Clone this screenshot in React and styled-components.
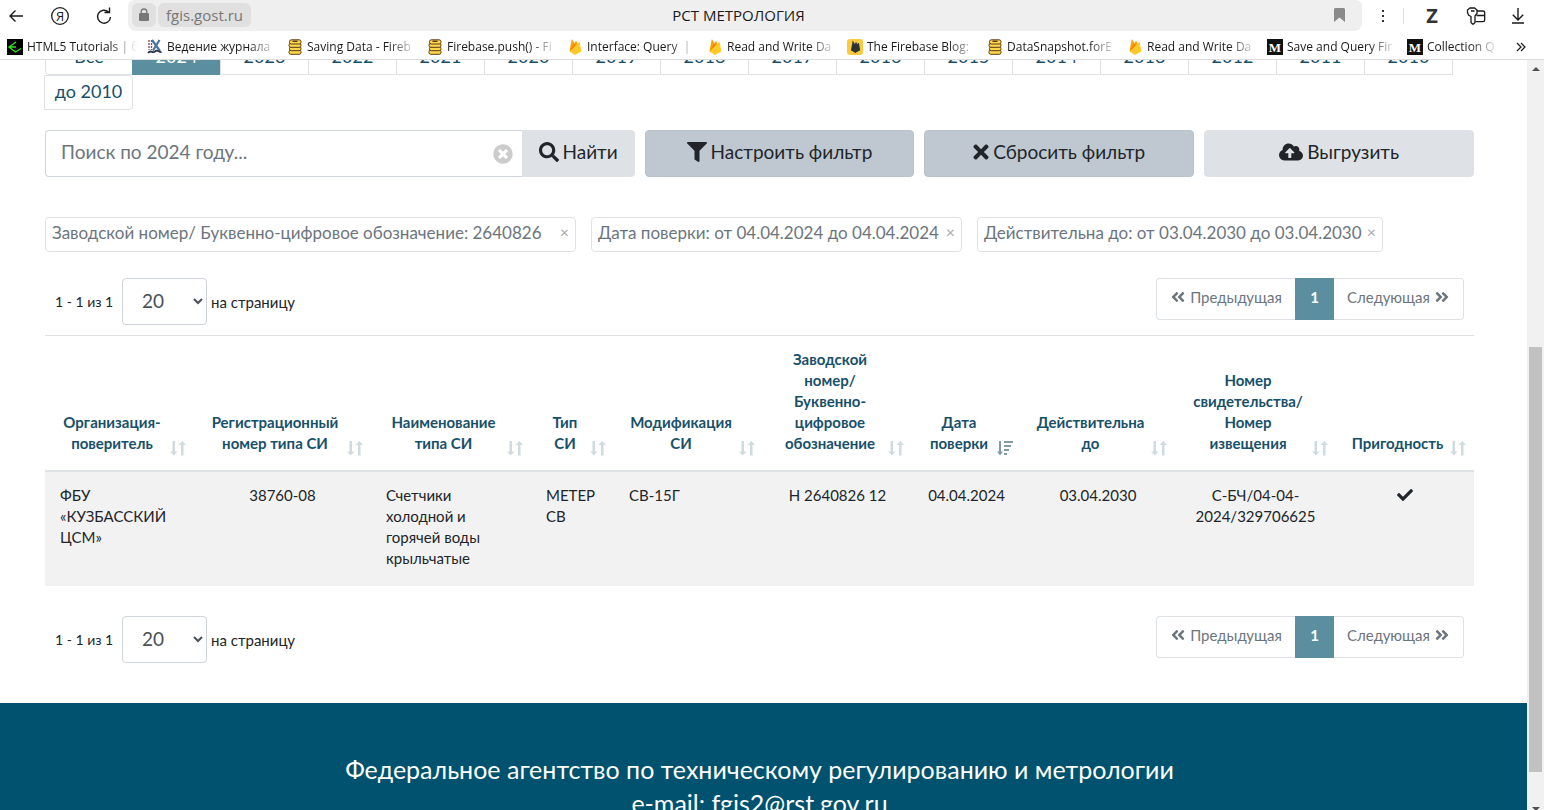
import React from "react";
import styled, { createGlobalStyle, css } from "styled-components";
import {
  FaSearch,
  FaFilter,
  FaTimes,
  FaTimesCircle,
  FaCloudUploadAlt,
  FaAngleDoubleLeft,
  FaAngleDoubleRight,
  FaCheck,
} from "react-icons/fa";

const uiFont = `"Open Sans", "Noto Sans", sans-serif`;
const pageFont = `Lato, "Open Sans", "Noto Sans", sans-serif`;

const GlobalStyle = createGlobalStyle`
  *, *::before, *::after { box-sizing: border-box; }
  html, body { margin: 0; height: 100%; overflow: hidden; }
  button, input, select { font: inherit; color: inherit; margin: 0; }
`;

const Window = styled.div`
  display: flex;
  flex-direction: column;
  height: 100vh;
  background: #fff;
  font-family: ${pageFont};
  color: #212529;
`;

/* ---------- Browser chrome ---------- */

const TopBar = styled.header`
  display: flex;
  flex: none;
  height: 31px;
  font-family: ${uiFont};
`;

const NavButtons = styled.div`
  display: flex;
  align-items: center;
  gap: 26px;
  width: 128px;
  padding-left: 7px;
`;

const IconButton = styled.button`
  display: flex;
  align-items: center;
  justify-content: center;
  padding: 0;
  border: 0;
  background: none;
  color: #1a1a1a;
  svg { display: block; }
`;

const AddressBar = styled.div`
  display: grid;
  grid-template-columns: 1fr auto 1fr;
  align-items: center;
  flex: 1;
  padding: 0 17px 1px 4px;
  border-radius: 6px 6px 8px 8px;
  background: #efefef;
`;

const AddressGroup = styled.div`
  display: flex;
  align-items: center;
  gap: 2px;
`;

const AddressPill = styled.button`
  display: flex;
  align-items: center;
  height: 24px;
  padding: ${(p) => (p.$icon ? "0 7px" : "0 8px 1px")};
  border: 0;
  border-radius: 6px;
  background: #e0e0e0;
  color: #777;
  font-size: 15px;
`;

const PageTitle = styled.span`
  font-size: 15px;
  color: #1a1a1a;
`;

const AddressEnd = styled.div`
  display: flex;
  justify-content: flex-end;
`;

const Tools = styled.div`
  display: grid;
  grid-template-columns: 41px 1px 56px 32px 1fr;
  align-items: center;
  justify-items: center;
  width: 182px;
`;

const LetterButton = styled(IconButton)`
  color: #333;
  font-size: 20px;
  font-weight: 700;
  line-height: 24px;
`;

const Divider = styled.span`
  width: 1px;
  height: 16px;
  background: #ddd;
`;

const BookmarkBar = styled.nav`
  display: flex;
  flex: none;
  align-items: center;
  height: 29px;
  padding: 4px 0 0 7px;
  border-bottom: 1px solid #ddd;
  font-family: ${uiFont};
  font-size: 12px;
  color: #1a1a1a;
`;

const BookmarkList = styled.div`
  display: flex;
  flex: 1;
  min-width: 0;
  overflow: hidden;
`;

const Bookmark = styled.a`
  display: flex;
  align-items: center;
  gap: 4px;
  flex: 0 0 140px;
  min-width: 0;
  padding-right: 10px;
  color: inherit;
  text-decoration: none;
  svg { flex: none; }
  &:last-child { flex: 1 1 0; padding-right: 0; }
`;

const BookmarkText = styled.span`
  flex: 1;
  overflow: hidden;
  white-space: pre;
  line-height: 20px;
  mask-image: linear-gradient(to right, #000 calc(100% - 28px), transparent);
`;

const MoreButton = styled(IconButton)`
  width: 46px;
  height: 20px;
`;

/* ---------- Scrolled page ---------- */

const Viewport = styled.div`
  display: flex;
  flex: 1;
  min-height: 0;
`;

const Page = styled.div`
  display: flex;
  flex-direction: column;
  flex: 1;
  min-width: 0;
  overflow: hidden;
`;

const Main = styled.main`
  flex: none;
  padding: 0 53px 40px 45px;
`;

const YearTabs = styled.div`
  display: flex;
  flex-wrap: wrap;
  margin-top: -20px;
  margin-bottom: 20px;
`;

const YearTab = styled.button`
  width: 89px;
  height: 35px;
  margin-left: -1px;
  padding: 0 0 4px;
  border: 1px solid #dee2e6;
  background: #fff;
  color: #18506a;
  font-size: 18px;
  line-height: 24px;
  &:first-child { width: 88px; margin-left: 0; border-radius: 4px 0 0 4px; }
  &:last-child { border-radius: 0 4px 4px 0; }
  ${(p) => p.$active && css`
    border-color: #5b8fa0;
    background: #5b8fa0;
    color: #fff;
  `}
`;

const SearchRow = styled.form`
  display: grid;
  grid-template-columns: minmax(0, 590fr) repeat(3, minmax(0, 270fr));
  gap: 10px;
  height: 47px;
  margin-bottom: 40px;
  font-size: 19px;
`;

const SearchGroup = styled.div`
  display: flex;
`;

const SearchField = styled.div`
  display: flex;
  align-items: center;
  flex: 1;
  min-width: 0;
  padding: 0 9px 0 15px;
  border: 1px solid #ced4da;
  border-right: 0;
  border-radius: 4px 0 0 4px;
`;

const SearchInput = styled.input`
  flex: 1;
  min-width: 0;
  padding: 0 0 4px;
  border: 0;
  outline: 0;
  background: none;
  &::placeholder { color: #6c757d; opacity: 1; }
`;

const ClearButton = styled(IconButton)`
  color: #ccc;
`;

const ActionButton = styled.button`
  display: flex;
  align-items: center;
  justify-content: center;
  gap: 4px;
  padding: 0 0 4px;
  border: 1px solid ${(p) => (p.$strong ? "#b8c2ca" : "#dee2e6")};
  border-radius: 4px;
  background: ${(p) => (p.$strong ? "#bfc8d0" : "#dee2e6")};
  white-space: nowrap;
`;

const FindButton = styled(ActionButton)`
  width: 113px;
  border-radius: 0 4px 4px 0;
`;

const CrossIcon = styled(FaTimes)`
  width: 16px;
  height: 22px;
`;

const Chips = styled.div`
  display: flex;
  flex-wrap: wrap;
  gap: 15px;
  margin-bottom: 26px;
`;

const Chip = styled.div`
  display: flex;
  align-items: center;
  justify-content: space-between;
  gap: 4px;
  min-width: ${(p) => p.$w}px;
  height: 35px;
  padding: 0 6px 5px;
  border: 1px solid #dee2e6;
  border-radius: 4px;
  color: #6c757d;
  font-size: 17px;
  white-space: nowrap;
`;

const ChipClose = styled.button`
  padding: 0;
  border: 0;
  background: none;
  color: #aaa;
  font-size: 16px;
  line-height: 16px;
`;

const PagerRow = styled.div`
  display: flex;
  align-items: flex-start;
  justify-content: space-between;
  padding: 0 10px;
  font-size: 15px;
`;

const PageSize = styled.div`
  display: flex;
  align-items: center;
`;

const Count = styled.span`
  width: 67px;
  font-size: 14px;
`;

const SizeLabel = styled.label`
  display: flex;
  align-items: center;
  gap: 4px;
`;

const SizeSelect = styled.select`
  width: 85px;
  height: 47px;
  padding: 0 1px 2px 15px;
  border: 1px solid #ced4da;
  border-radius: 4px;
  background: #fff;
  color: #495057;
  font-size: 19px;
`;

const Pagination = styled.nav`
  display: flex;
  height: 42px;
`;

const PageLink = styled.button`
  display: flex;
  align-items: center;
  justify-content: center;
  gap: 4px;
  width: ${(p) => (p.$active ? 39 : p.$next ? 130 : 139)}px;
  padding: 0 0 4px;
  border: 1px solid #dee2e6;
  background: #fff;
  color: #6c757d;
  &:first-child { border-right: 0; border-radius: 4px 0 0 4px; }
  &:last-child { border-left: 0; border-radius: 0 4px 4px 0; }
  ${(p) => p.$active && css`
    border-color: #5b8fa0;
    background: #5b8fa0;
    color: #fff;
    font-weight: 700;
  `}
`;

const Table = styled.table`
  width: 100%;
  margin: 10px 0 30px;
  border-collapse: separate;
  border-spacing: 0;
  table-layout: fixed;
  font-size: 15px;
  line-height: 21px;
`;

const Th = styled.th`
  position: relative;
  padding: 13px 30px 16px 15px;
  border-top: 1px solid #dee2e6;
  border-bottom: 2px solid #dee2e6;
  vertical-align: bottom;
  color: #18506a;
  font-weight: 700;
  white-space: pre;
`;

const HeadLabel = styled.div`
  display: flex;
  justify-content: center;
`;

const SortMark = styled.button`
  position: absolute;
  right: 8px;
  bottom: 14px;
  padding: 0;
  border: 0;
  background: none;
  color: ${(p) => (p.$active ? "#7f9ba6" : "#d0dbdf")};
  svg { display: block; }
`;

const Td = styled.td`
  padding: 13px 15px 17px;
  background: #f2f2f2;
  vertical-align: top;
  text-align: ${(p) => (p.$left ? "left" : "center")};
  white-space: pre;
  svg { vertical-align: -2px; }
`;

const Footer = styled.footer`
  flex: 1 0 auto;
  padding: 49px 53px 49px 45px;
  background: #00526e;
  color: #fff;
  font-size: 25px;
  line-height: 34px;
  text-align: center;
  p { margin: 0; }
  a { color: inherit; text-decoration: none; }
`;

const ScrollTrack = styled.div`
  display: flex;
  flex-direction: column;
  align-items: center;
  width: 17px;
  background: #f1f1f1;
`;

const ScrollArrow = styled.div`
  display: flex;
  align-items: center;
  justify-content: center;
  flex: none;
  height: 17px;
`;

const ScrollEnd = styled(ScrollArrow)`
  height: 7px;
  align-items: flex-end;
`;

const ScrollGap = styled.div`
  flex: ${(p) => p.$grow} 1 0;
`;

const ScrollThumb = styled.div`
  flex: 425 1 0;
  width: 13px;
  background: #c1c1c1;
`;

/* ---------- Drawings ---------- */

const Stroke = ({ w = 18, h = 18, sw = 1.4, children }) => (
  <svg width={w} height={h} viewBox={`0 0 ${w} ${h}`} fill="none" stroke="currentColor" strokeWidth={sw} aria-hidden="true">
    {children}
  </svg>
);

const BackIcon = () => (
  <Stroke><path d="M16 9H3M8.500 3.500 3 9l5.500 5.500" /></Stroke>
);

const YandexIcon = () => (
  <Stroke sw={1.300}>
    <circle cx="9" cy="9" r="8.300" />
    <text x="9" y="13.500" textAnchor="middle" fontSize="13" fill="currentColor" stroke="none">Я</text>
  </Stroke>
);

const ReloadIcon = () => (
  <Stroke><path d="M13.500 5A6.500 6.500 0 1 0 15.500 10M14.500 .5v5h-5" /></Stroke>
);

const LockIcon = () => (
  <svg width="10" height="14" viewBox="0 0 10 14" aria-hidden="true">
    <path d="M2.200 6V3.800a2.800 2.800 0 0 1 5.600 0V6" fill="none" stroke="#777" strokeWidth="1.300" />
    <rect y="5" width="10" height="8" rx="1.200" fill="#777" />
  </svg>
);

const RibbonIcon = () => (
  <svg width="11" height="14" viewBox="0 0 11 14" aria-hidden="true">
    <path d="M0 1.500C0 .6.600 0 1.500 0h8c.9 0 1.500.6 1.500 1.500V14L5.500 9.500 0 14z" fill="#8a8a8a" />
  </svg>
);

const DotsIcon = () => (
  <svg width="4" height="14" viewBox="0 0 4 14" fill="#333" aria-hidden="true">
    <rect x="1" y="1" width="2" height="2" /><rect x="1" y="6" width="2" height="2" /><rect x="1" y="11" width="2" height="2" />
  </svg>
);

const KeyCardIcon = () => (
  <Stroke w={20} h={18} sw={1.300}>
    <path d="M4 1h4.500l2.500 2v3.500L9 9v6.500L7.500 17H6.500L5 15.500V9.500L2.500 8 1.500 5.500V3zM5 4h3.500" />
    <path d="M11 4h6c1 0 1.700.7 1.700 1.700V13c0 1-.7 1.700-1.700 1.700H9.500M10.500 8.500h8" />
  </Stroke>
);

const DownloadIcon = () => (
  <Stroke w={14} h={16}><path d="M7 0v11.500M1.800 6.800 7 12l5.200-5.200M1 15h12" /></Stroke>
);

const ChevronsIcon = () => (
  <Stroke w={10} h={10} sw={1.200}><path d="m1 1 4 4-4 4M5 1l4 4-4 4" /></Stroke>
);

const Fav = ({ children }) => (
  <svg width="16" height="16" viewBox="0 0 16 16" aria-hidden="true">{children}</svg>
);

const flame = (a, b, c) => (
  <>
    <path d="M2.500 12.500 4.600.8c.1-.4.500-.5.700-.1l2.200 3.800L8.700 2.300c.2-.3.600-.3.800 0l4 10.200z" fill={a} />
    <path d="m2.500 12.500 5-8 2.200 3.800z" fill={b} />
    <path d="M2.500 12.500 12 3.300c.3-.3.700-.1.800.2l1.500 9-5.800 3.300a1 1 0 0 1-.9 0z" fill={c} />
  </>
);

const FAVICONS = {
  geeks: (
    <Fav>
      <rect width="16" height="16" fill="#000" />
      <path d="M9 3 2 8l6.500 5L14 9.500M2 8h7" fill="none" stroke="#2fdc1c" strokeWidth="1.400" />
    </Fav>
  ),
  ix: (
    <Fav>
      <path d="M2 1v10M4.500 1v10" stroke="#8a4550" strokeWidth="1.300" strokeDasharray="2 1" />
      <path d="m5 1 8 11M12.500 1 6 11.500" stroke="#48749d" strokeWidth="2.200" />
      <path d="M1 14c3-4 5 1 7-1.500s4 1 6.500.5" fill="none" stroke="#253447" strokeWidth="1.800" />
    </Fav>
  ),
  db: (
    <Fav>
      <g fill="#ffd84a" stroke="#5b3a16" strokeWidth="1">
        <rect x="2" y="11" width="12" height="4.300" rx="1.800" />
        <rect x="2.500" y="7.700" width="11.500" height="4" rx="1.800" />
        <rect x="2" y="4.300" width="12" height="4" rx="1.800" />
        <rect x="2.500" y=".8" width="11.500" height="4.200" rx="1.800" />
      </g>
      <path d="M5.500 2.300h5" stroke="#5b3a16" strokeWidth="1.400" />
    </Fav>
  ),
  fire: <Fav>{flame("#ffa000", "#f57c00", "#ffca28")}</Fav>,
  blog: (
    <Fav>
      <rect width="16" height="16" rx="3" fill="#fcca3f" />
      <g transform="translate(2 1.500) scale(.78)">{flame("#333c40", "#222a2d", "#2c3437")}</g>
    </Fav>
  ),
  medium: (
    <Fav>
      <rect width="16" height="16" fill="#111" />
      <text x="8" y="12.500" textAnchor="middle" fontFamily="Liberation Serif, serif" fontWeight="700" fontSize="13" fill="#fff">M</text>
    </Fav>
  ),
};

const SortIcon = ({ active }) => (
  <svg width="16" height="15" viewBox="0 0 16 15" fill="currentColor" aria-hidden="true">
    {active ? (
      <path d="M2 0h2v10.500h2L3 14.500l-3-4h2zM7 0h9v2H7zM7 4h7v2H7zM7 8h5v2H7zM7 12h3v2H7z" />
    ) : (
      <path d="M2.500 0H5v10.500h2.500l-3.700 4-3.700-4h2.400zM11 14.500h2.500V4H16L12.300 0 8.500 4H11z" />
    )}
  </svg>
);

/* ---------- Data ---------- */

const bookmarks = [
  ["geeks", "HTML5 Tutorials | б"],
  ["ix", "Ведение журнала"],
  ["db", "Saving Data - Fireb"],
  ["db", "Firebase.push() - Fi"],
  ["fire", "Interface: Query  |"],
  ["fire", "Read and Write Da"],
  ["blog", "The Firebase Blog:"],
  ["db", "DataSnapshot.forE"],
  ["fire", "Read and Write Da"],
  ["medium", "Save and Query Fir"],
  ["medium", "Collection Q"],
];

const years = [
  "Все", "2024", "2023", "2022", "2021", "2020", "2019", "2018", "2017",
  "2016", "2015", "2014", "2013", "2012", "2011", "2010", "до 2010",
];

const filters = [
  { text: "Заводской номер/ Буквенно-цифровое обозначение: 2640826", w: 531 },
  { text: "Дата поверки: от 04.04.2024 до 04.04.2024", w: 371 },
  { text: "Действительна до: от 03.04.2030 до 03.04.2030", w: 406 },
];

const columns = [
  { w: 149, head: "Организация-\nповеритель", cell: "ФБУ\n«КУЗБАССКИЙ\nЦСМ»", left: true },
  { w: 177, head: "Регистрационный\nномер типа СИ", cell: "38760-08" },
  { w: 160, head: "Наименование\nтипа СИ", cell: "Счетчики\nхолодной и\nгорячей воды\nкрыльчатые", left: true },
  { w: 83, head: "Тип\nСИ", cell: "МЕТЕР\nСВ", left: true },
  { w: 149, head: "Модификация\nСИ", cell: "СВ-15Г", left: true },
  { w: 149, head: "Заводской\nномер/\nБуквенно-\nцифровое\nобозначение", cell: "Н 2640826 12" },
  { w: 109, head: "Дата\nповерки", cell: "04.04.2024", sorted: true },
  { w: 154, head: "Действительна\nдо", cell: "03.04.2030" },
  { w: 161, head: "Номер\nсвидетельства/\nНомер\nизвещения", cell: "С-БЧ/04-04-\n2024/329706625" },
  { w: 138, head: "Пригодность", cell: <FaCheck size={16} aria-label="Пригодно" /> },
];

const totalWidth = columns.reduce((sum, c) => sum + c.w, 0);

const Col = styled.col`
  width: ${(p) => (p.$w / totalWidth) * 100}%;
`;

function Pager({ id }) {
  return (
    <PagerRow>
      <PageSize>
        <Count>1 - 1 из 1</Count>
        <SizeLabel htmlFor={id}>
          <SizeSelect id={id} defaultValue="20">
            <option>20</option>
            <option>50</option>
            <option>100</option>
          </SizeSelect>
          на страницу
        </SizeLabel>
      </PageSize>
      <Pagination aria-label="Страницы">
        <PageLink type="button"><FaAngleDoubleLeft size={16} />Предыдущая</PageLink>
        <PageLink type="button" $active>1</PageLink>
        <PageLink type="button" $next>Следующая<FaAngleDoubleRight size={16} /></PageLink>
      </Pagination>
    </PagerRow>
  );
}

export default function App() {
  return (
    <Window>
      <GlobalStyle />
      <TopBar>
        <NavButtons>
          <IconButton aria-label="Назад"><BackIcon /></IconButton>
          <IconButton aria-label="Яндекс"><YandexIcon /></IconButton>
          <IconButton aria-label="Обновить"><ReloadIcon /></IconButton>
        </NavButtons>
        <AddressBar>
          <AddressGroup>
            <AddressPill $icon aria-label="Защищено"><LockIcon /></AddressPill>
            <AddressPill>fgis.gost.ru</AddressPill>
          </AddressGroup>
          <PageTitle>РСТ МЕТРОЛОГИЯ</PageTitle>
          <AddressEnd>
            <IconButton aria-label="В закладки"><RibbonIcon /></IconButton>
          </AddressEnd>
        </AddressBar>
        <Tools>
          <IconButton aria-label="Меню"><DotsIcon /></IconButton>
          <Divider />
          <LetterButton aria-label="Расширение">Z</LetterButton>
          <IconButton aria-label="Пароли"><KeyCardIcon /></IconButton>
          <IconButton aria-label="Загрузки"><DownloadIcon /></IconButton>
        </Tools>
      </TopBar>
      <BookmarkBar>
        <BookmarkList>
          {bookmarks.map(([icon, text], i) => (
            <Bookmark key={i} href="#">
              {FAVICONS[icon]}
              <BookmarkText>{text}</BookmarkText>
            </Bookmark>
          ))}
        </BookmarkList>
        <MoreButton aria-label="Ещё"><ChevronsIcon /></MoreButton>
      </BookmarkBar>

      <Viewport>
        <Page>
          <Main>
            <YearTabs>
              {years.map((y) => (
                <YearTab key={y} type="button" $active={y === "2024"}>{y}</YearTab>
              ))}
            </YearTabs>

            <SearchRow onSubmit={(e) => e.preventDefault()}>
              <SearchGroup>
                <SearchField>
                  <SearchInput aria-label="Поиск" placeholder="Поиск по 2024 году..." />
                  <ClearButton type="button" aria-label="Очистить"><FaTimesCircle size={20} /></ClearButton>
                </SearchField>
                <FindButton type="submit"><FaSearch size={20} />Найти</FindButton>
              </SearchGroup>
              <ActionButton type="button" $strong><FaFilter size={20} />Настроить фильтр</ActionButton>
              <ActionButton type="button" $strong><CrossIcon />Сбросить фильтр</ActionButton>
              <ActionButton type="button"><FaCloudUploadAlt size={24} />Выгрузить</ActionButton>
            </SearchRow>

            <Chips>
              {filters.map((f) => (
                <Chip key={f.text} $w={f.w}>
                  {f.text}
                  <ChipClose type="button" aria-label="Убрать фильтр">×</ChipClose>
                </Chip>
              ))}
            </Chips>

            <Pager id="size-top" />

            <Table>
              <colgroup>
                {columns.map((c) => <Col key={c.head} $w={c.w} />)}
              </colgroup>
              <thead>
                <tr>
                  {columns.map((c) => (
                    <Th key={c.head} scope="col">
                      <HeadLabel>{c.head}</HeadLabel>
                      <SortMark type="button" aria-label="Сортировать" $active={c.sorted}>
                        <SortIcon active={c.sorted} />
                      </SortMark>
                    </Th>
                  ))}
                </tr>
              </thead>
              <tbody>
                <tr>
                  {columns.map((c) => <Td key={c.head} $left={c.left}>{c.cell}</Td>)}
                </tr>
              </tbody>
            </Table>

            <Pager id="size-bottom" />
          </Main>
          <Footer>
            <p>Федеральное агентство по техническому регулированию и метрологии</p>
            <p>e-mail: <a href="mailto:fgis2@rst.gov.ru">fgis2@rst.gov.ru</a></p>
          </Footer>
        </Page>
        <ScrollTrack>
          <ScrollArrow>
            <svg width="8" height="4" viewBox="0 0 8 4" aria-hidden="true"><path d="M0 4 4 0l4 4z" fill="#505050" /></svg>
          </ScrollArrow>
          <ScrollGap $grow={270} />
          <ScrollThumb />
          <ScrollGap $grow={31} />
          <ScrollEnd>
            <svg width="8" height="3" viewBox="0 0 8 3" aria-hidden="true"><path d="m0 0 4 4 4-4z" fill="#505050" /></svg>
          </ScrollEnd>
        </ScrollTrack>
      </Viewport>
    </Window>
  );
}
